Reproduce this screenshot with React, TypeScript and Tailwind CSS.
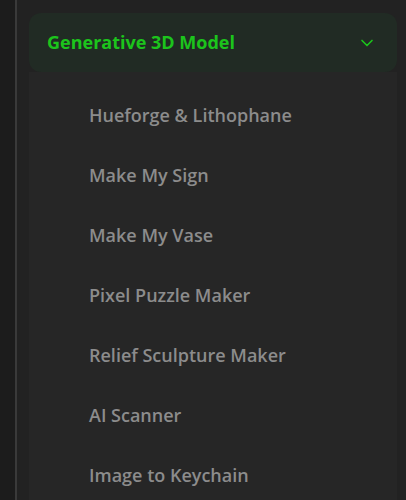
import React from 'react';

const items = [
    'Hueforge & Lithophane',
    'Make My Sign',
    'Make My Vase',
    'Pixel Puzzle Maker',
    'Relief Sculpture Maker',
    'AI Scanner',
    'Image to Keychain',
];

const ChevronDown: React.FC<{ className?: string }> = ({ className }) => (
    <svg viewBox="0 0 24 24" fill="none" stroke="currentColor" strokeWidth={2} strokeLinecap="round" strokeLinejoin="round" className={className}>
        <path d="m6 9 6 6 6-6" />
    </svg>
);

const App: React.FC = () => {
    return (
        <div className="flex h-[500px] w-[406px] overflow-hidden bg-[#222222]" style={{ fontFamily: '"Open Sans", sans-serif' }}>
            <div className="w-[15px] shrink-0 bg-[#1c1c1c]" />
            <div className="w-[2px] shrink-0 bg-[#3a3a3a]" />
            <div className="flex-1 pl-[12px] pr-[9px] pt-[13px]">
                <div className="flex h-[59px] items-center justify-between rounded-[12px] bg-[#212b24] pl-[18px] pr-[20px]">
                    <span className="text-[18px] font-bold text-[#1cc41c]">Generative 3D Model</span>
                    <ChevronDown className="h-[20px] w-[20px] text-[#1cc41c]" />
                </div>
                <div className="h-full bg-[#262626] pt-[13px]">
                    {items.map(item => (
                        <div key={item} className="flex h-[60px] items-center pl-[60px] text-[18px] font-semibold text-[#8c8c8c]">
                            {item}
                        </div>
                    ))}
                </div>
            </div>
        </div>
    );
};

export default App;
